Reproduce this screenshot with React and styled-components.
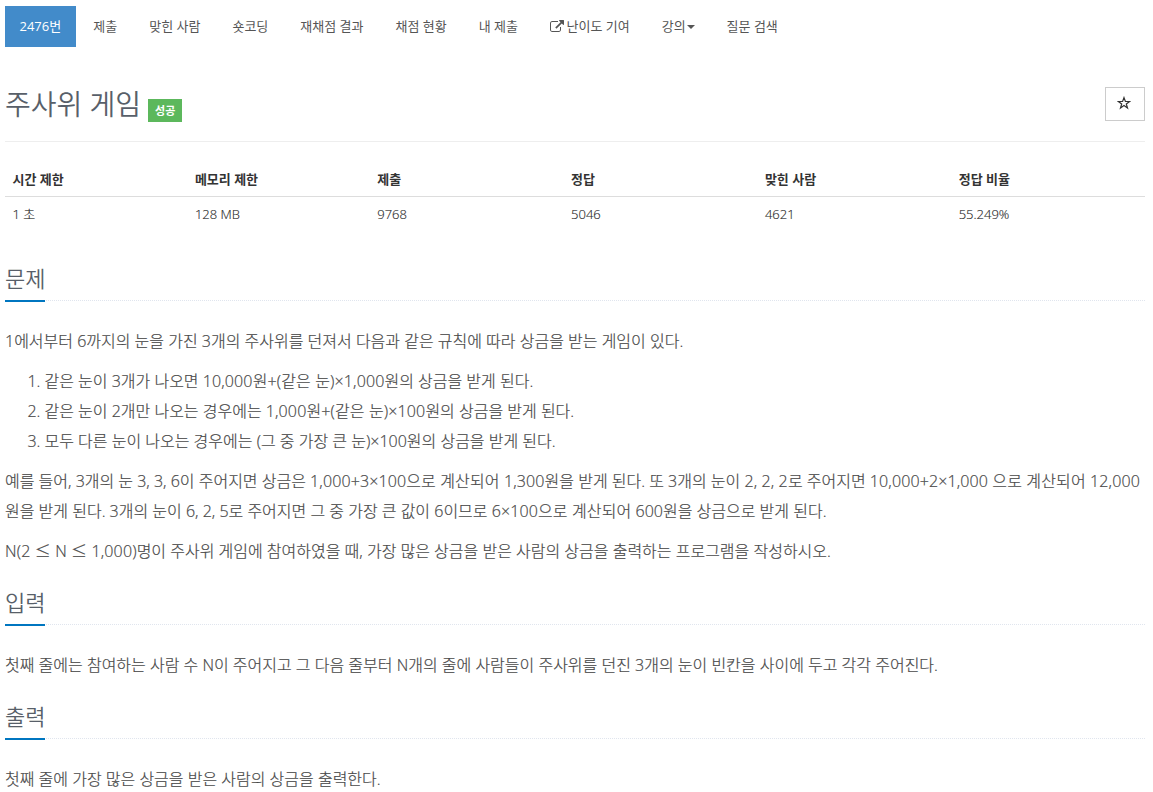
import React from 'react';
import styled, { createGlobalStyle } from 'styled-components';

const GlobalStyle = createGlobalStyle`
  * {
    box-sizing: border-box;
  }
  body {
    margin: 0;
    background-color: #fff;
    color: #333;
    font-family: 'Open Sans', 'Noto Sans CJK KR', sans-serif;
    font-size: 13px;
    line-height: 1.6;
  }
`;

const Page = styled.div`
  width: 1140px;
  height: 792px;
  margin-left: 5px;
  padding-top: 6px;
  overflow: hidden;
`;

const Menu = styled.ul`
  display: flex;
  gap: 2px;
  margin: 0;
  padding: 0;
  list-style: none;
`;

const MenuLink = styled.a`
  display: flex;
  align-items: center;
  height: 41px;
  margin-right: ${(props) => (props.$active ? '0.6px' : '0')};
  padding: ${(props) => (props.$active ? '0 14.5px' : '0 15px')};
  white-space: nowrap;
  color: ${(props) => (props.$active ? '#fff' : '#555')};
  background-color: ${(props) => (props.$active ? '#428bca' : 'transparent')};
  cursor: pointer;
`;

const LinkIcon = styled.svg`
  width: 14px;
  height: 14px;
  margin-right: 2.5px;
  fill: currentColor;
`;

const Caret = styled.span`
  margin-left: 1px;
  border-top: 4px solid currentColor;
  border-left: 4px solid transparent;
  border-right: 4px solid transparent;
`;

const PageHeader = styled.div`
  display: flex;
  justify-content: space-between;
  align-items: flex-start;
  height: 95px;
  padding-top: 40px;
  border-bottom: 1px solid #eee;
`;

const TitleGroup = styled.div`
  display: flex;
  align-items: flex-start;
`;

const Title = styled.h1`
  margin: 0;
  font-size: 28px;
  font-weight: 350;
  line-height: 35px;
  color: #585f69;
`;

const Label = styled.span`
  height: 23px;
  margin: 12px 0 0 7px;
  padding: 0 7px;
  font-size: 11px;
  font-weight: 700;
  line-height: 23px;
  color: #fff;
  background-color: #5cb85c;
`;

const StarButton = styled.button`
  display: flex;
  align-items: center;
  justify-content: center;
  width: 40px;
  height: 34px;
  padding: 0 2px 2px 0;
  color: #333;
  background-color: #fff;
  border: 1px solid #ccc;
  cursor: pointer;
`;

const InfoTable = styled.table`
  width: 100%;
  margin-top: 20px;
  table-layout: fixed;
  border-collapse: collapse;
  line-height: 18px;

  th,
  td {
    padding: 8px 7.5px;
    text-align: left;
  }
  th {
    border-bottom: 1px solid #ddd;
    font-weight: 700;
  }
  td {
    font-weight: 300;
    color: #2b2b2b;
    -webkit-text-stroke: 0.15px #2b2b2b;
  }
`;

const Headline = styled.div`
  display: flex;
  height: ${(props) => props.$height || 49}px;
  align-items: flex-end;
  margin-bottom: 25px;
  border-bottom: 1px dotted #e0e5ee;
`;

const HeadlineText = styled.h2`
  margin: 0 0 -2px;
  padding-bottom: 5px;
  font-size: 22px;
  font-weight: 350;
  line-height: 33px;
  color: #585f69;
  border-bottom: 2px solid #0076c0;
`;

const ProblemText = styled.div`
  font-size: 16px;
  font-weight: 300;
  line-height: 30px;
  color: #484848;
  -webkit-text-stroke: 0.2px #484848;

  p {
    margin: 0 0 10px;
  }
  ol {
    margin: 0 0 10px;
    padding-left: 39.5px;
  }
`;

const Numbers = styled.span`
  letter-spacing: 0.13px;
`;

const Sign = styled.span`
  font-family: 'Noto Sans CJK KR', sans-serif;
  line-height: 1;
`;

const menus = [
  { name: '2476번', active: true },
  { name: '제출' },
  { name: '맞힌 사람' },
  { name: '숏코딩' },
  { name: '재채점 결과' },
  { name: '채점 현황' },
  { name: '내 제출' },
  { name: '난이도 기여', external: true },
  { name: '강의', caret: true },
  { name: '질문 검색' },
];

const infos = [
  { name: '시간 제한', value: '1 초', width: '16%' },
  { name: '메모리 제한', value: '128 MB', width: '16%' },
  { name: '제출', value: '9768', width: '17%' },
  { name: '정답', value: '5046', width: '17%' },
  { name: '맞힌 사람', value: '4621', width: '17%' },
  { name: '정답 비율', value: '55.249%', width: '17%' },
];

const ExternalIcon = () => (
  <LinkIcon viewBox="0 0 1792 1792">
    <path d="M1408 928v320q0 119-84.500 203.500t-203.500 84.500h-832q-119 0-203.500-84.500t-84.500-203.500v-832q0-119 84.500-203.500t203.500-84.500h704q14 0 23 9t9 23v64q0 14-9 23t-23 9h-704q-66 0-113 47t-47 113v832q0 66 47 113t113 47h832q66 0 113-47t47-113v-320q0-14 9-23t23-9h64q14 0 23 9t9 23zm384-864v512q0 26-19 45t-45 19-45-19l-176-176-652 652q-10 10-23 10t-23-10l-114-114q-10-10-10-23t10-23l652-652-176-176q-19-19-19-45t19-45 45-19h512q26 0 45 19t19 45z" />
  </LinkIcon>
);

const StarIcon = () => (
  <svg width="14" height="14" viewBox="0 0 14 14" fill="none" stroke="currentColor" strokeWidth="1.2">
    <path d="M7 1.600L8.400 5.500H12.600L9.300 8L10.500 12L7 9.600L3.500 12L4.700 8L1.400 5.500H5.600Z" />
  </svg>
);

const App = () => {
  return (
    <>
      <GlobalStyle />
      <Page>
        <Menu>
          {menus.map((menu) => (
            <li key={menu.name}>
              <MenuLink $active={menu.active}>
                {menu.external && <ExternalIcon />}
                {menu.name}
                {menu.caret && <Caret />}
              </MenuLink>
            </li>
          ))}
        </Menu>

        <PageHeader>
          <TitleGroup>
            <Title>주사위 게임</Title>
            <Label>성공</Label>
          </TitleGroup>
          <StarButton>
            <StarIcon />
          </StarButton>
        </PageHeader>

        <InfoTable>
          <thead>
            <tr>
              {infos.map((info) => (
                <th key={info.name} width={info.width}>{info.name}</th>
              ))}
            </tr>
          </thead>
          <tbody>
            <tr>
              {infos.map((info) => (
                <td key={info.name}>{info.value}</td>
              ))}
            </tr>
          </tbody>
        </InfoTable>

        <Headline $height={70}>
          <HeadlineText>문제</HeadlineText>
        </Headline>
        <ProblemText>
          <p>1에서부터 6까지의 눈을 가진 3개의 주사위를 던져서 다음과 같은 규칙에 따라 상금을 받는 게임이 있다.</p>
          <ol>
            <li>같은 눈이 3개가 나오면 <Numbers>10,000원+(같은 눈)×1,000</Numbers>원의 상금을 받게 된다.</li>
            <li>같은 눈이 2개만 나오는 경우에는 <Numbers>1,000원+(같은 눈)×100</Numbers>원의 상금을 받게 된다.</li>
            <li>모두 다른 눈이 나오는 경우에는 (그 중 가장 큰 눈)×100원의 상금을 받게 된다.</li>
          </ol>
          <p>
            예를 들어, 3개의 눈 3, 3, 6이 주어지면 상금은 <Numbers>1,000+3×100으로 계산되어 1,300</Numbers>원을 받게 된다. 또 3개의 눈이 <Numbers>2, 2, 2</Numbers>로 주어지면 <Numbers>10,000+2×1,000 으로 계산되어 12,000</Numbers>원을 받게 된다. 3개의 눈이 6, 2, 5로 주어지면 그 중 가장 큰 값이 6이므로 <Numbers>6×100으로 계산되어</Numbers> 600원을 상금으로 받게 된다.
          </p>
          <p><Numbers>N(2 <Sign>≤</Sign> N <Sign>≤</Sign> 1,000)</Numbers>명이 주사위 게임에 참여하였을 때, 가장 많은 상금을 받은 사람의 상금을 출력하는 프로그램을 작성하시오.</p>
        </ProblemText>

        <Headline>
          <HeadlineText>입력</HeadlineText>
        </Headline>
        <ProblemText>
          <p>첫째 줄에는 참여하는 사람 수 N이 주어지고 그 다음 줄부터 N개의 줄에 사람들이 주사위를 던진 3개의 눈이 빈칸을 사이에 두고 각각 주어진다.</p>
        </ProblemText>

        <Headline>
          <HeadlineText>출력</HeadlineText>
        </Headline>
        <ProblemText>
          <p>첫째 줄에 가장 많은 상금을 받은 사람의 상금을 출력한다.</p>
        </ProblemText>
      </Page>
    </>
  );
};

export default App;
